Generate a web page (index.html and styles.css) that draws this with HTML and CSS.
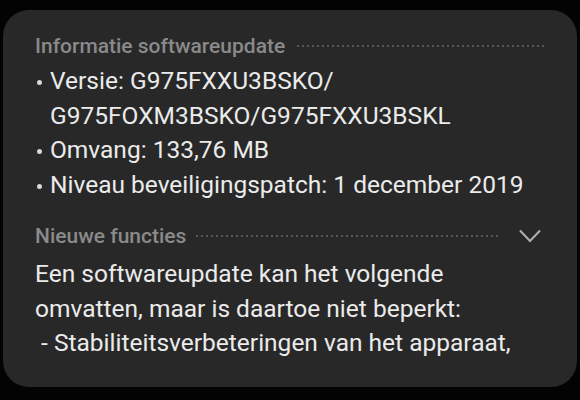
FILE: index.html
```html
<!doctype html>
<html lang="nl">
<head>
	<meta charset="UTF-8">
	<title>Software-update</title>
	<link rel="stylesheet" href="styles.css">
</head>
<body>
<div class="card">
	<div class="sec_head">
		<span class="sec_title">Informatie softwareupdate</span>
		<span class="dots"></span>
	</div>
	<ul class="info">
		<li>Versie: G975FXXU3BSKO/<br>G975FOXM3BSKO/G975FXXU3BSKL</li>
		<li>Omvang: 133,76 MB</li>
		<li>Niveau beveiligingspatch: 1 december 2019</li>
	</ul>
	<div class="sec_head sec_new">
		<span class="sec_title">Nieuwe functies</span>
		<span class="dots"></span>
		<svg class="chev" width="22" height="14" viewBox="0 0 22 14"><path d="M1 1.5 L11 12 L21 1.5" fill="none" stroke="#b0b0b0" stroke-width="2"/></svg>
	</div>
	<p class="txt">Een softwareupdate kan het volgende<br>omvatten, maar is daartoe niet beperkt:<br>&nbsp;- Stabiliteitsverbeteringen van het apparaat,</p>
</div>
</body>
</html>
```

FILE: styles.css
```css
body{margin: 0;background: #030303;font-family: Roboto, "Liberation Sans", sans-serif;}
.card{margin: 10px 3px 0;height: 377px;background: #282828;border-radius: 26px;padding: 24px 32px 0;box-sizing: border-box;}
.sec_head{display: flex;align-items: center;height: 24px;}
.sec_title{font-size: 21px;line-height: 24px;font-weight: 500;color: #8a8a8a;}
.dots{flex: 1;height: 2px;margin: 0 0 0 12px;background: linear-gradient(to right, #565656 2px, transparent 2px) 0 0/5px 2px repeat-x;}
.info{list-style: none;margin: 6px 0 0;padding: 0;}
.info li{position: relative;padding-left: 15px;font-size: 24.5px;line-height: 34.5px;color: #ebebeb;}
.info li:before{content: '';position: absolute;left: 2px;top: 16px;width: 5px;height: 5px;border-radius: 50%;background: #d8d8d8;}
.sec_new{margin-top: 22px;}
.sec_new .dots{margin: 0 20px 0 10px;}
.chev{margin-right: 4px;}
.txt{margin: 9px 0 0;font-size: 24.5px;line-height: 34.5px;color: #ebebeb;}
```
